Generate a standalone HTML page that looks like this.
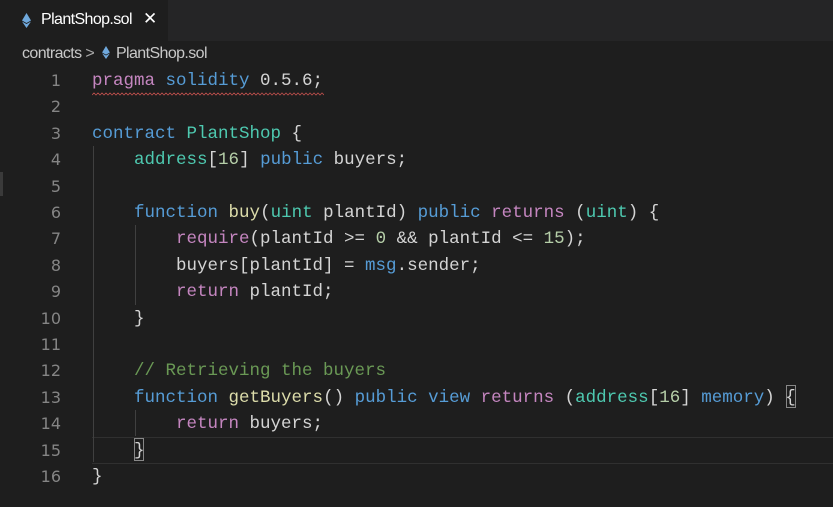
<!DOCTYPE html>
<html><head><style>
body{margin:0;width:833px;height:507px;background:#1e1e1e;overflow:hidden;position:relative;font-family:"Liberation Sans",sans-serif}
.tabbar{position:absolute;left:0;top:0;width:833px;height:41px;background:#252526}
.tab{position:absolute;left:0;top:0;width:168px;height:41px;background:#1e1e1e;color:#fff;font-size:16px;letter-spacing:-0.6px}
.crumb{position:absolute;left:22px;top:45px;color:#c8c8c8;font-size:16px;letter-spacing:-0.6px}
.ln{position:absolute;left:0;width:61px;text-align:right;color:#858585;font-family:"DejaVu Sans",sans-serif;font-size:16px}
.code{position:absolute;left:92px;white-space:pre;font-family:"Liberation Mono",monospace;font-size:17.5px;color:#d4d4d4}
.k{color:#569cd6}.p{color:#c586c0}.t{color:#4ec9b0}.n{color:#b5cea8}.f{color:#dcdcaa}.c{color:#6a9955}
.g{position:absolute;width:1px;background:#404040}
</style></head><body>
<div class="tabbar"></div>
<div class="tab">
<svg style="position:absolute;left:22px;top:13px" width="9" height="15" viewBox="0 0 9 15"><path d="M4.5 0L0 7.5 4.5 10 9 7.5Z" fill="#6fa8dc"/><path d="M4.5 11L0 8.5 4.5 15 9 8.5Z" fill="#6fa8dc"/></svg>
<span style="position:absolute;left:41px;top:11px">PlantShop.sol</span>
<span style="position:absolute;left:143px;top:9px;font-size:17px">✕</span>
</div>
<div class="crumb">contracts <span style="color:#aaa">&gt;</span>
<svg style="position:relative;top:1px;margin:0 6px 0 4px" width="8" height="13" viewBox="0 0 9 15"><path d="M4.5 0L0 7.5 4.5 10 9 7.5Z" fill="#6fa8dc"/><path d="M4.5 11L0 8.5 4.5 15 9 8.5Z" fill="#6fa8dc"/></svg>PlantShop.sol</div>
<div style="position:absolute;left:0;top:172px;width:3px;height:24px;background:#3a3a3a"></div>
<div style="position:absolute;left:92px;top:437px;width:741px;height:25px;border-top:1px solid #303030;border-bottom:1px solid #303030"></div>
<div class="g" style="left:93px;top:146px;height:316px"></div>
<div class="g" style="left:135px;top:225px;height:80px"></div>
<div class="g" style="left:135px;top:410px;height:26px"></div>
<div style="position:absolute;left:134px;top:438px;width:10px;height:23px;border:1px solid #888;box-sizing:border-box"></div>
<div style="position:absolute;left:786px;top:385px;width:10px;height:23px;border:1px solid #888;box-sizing:border-box"></div>
<svg style="position:absolute;left:92px;top:92px" width="232" height="4"><path d="M0 3 L2 1 L4 3 L6 1 L8 3 L10 1 L12 3 L14 1 L16 3 L18 1 L20 3 L22 1 L24 3 L26 1 L28 3 L30 1 L32 3 L34 1 L36 3 L38 1 L40 3 L42 1 L44 3 L46 1 L48 3 L50 1 L52 3 L54 1 L56 3 L58 1 L60 3 L62 1 L64 3 L66 1 L68 3 L70 1 L72 3 L74 1 L76 3 L78 1 L80 3 L82 1 L84 3 L86 1 L88 3 L90 1 L92 3 L94 1 L96 3 L98 1 L100 3 L102 1 L104 3 L106 1 L108 3 L110 1 L112 3 L114 1 L116 3 L118 1 L120 3 L122 1 L124 3 L126 1 L128 3 L130 1 L132 3 L134 1 L136 3 L138 1 L140 3 L142 1 L144 3 L146 1 L148 3 L150 1 L152 3 L154 1 L156 3 L158 1 L160 3 L162 1 L164 3 L166 1 L168 3 L170 1 L172 3 L174 1 L176 3 L178 1 L180 3 L182 1 L184 3 L186 1 L188 3 L190 1 L192 3 L194 1 L196 3 L198 1 L200 3 L202 1 L204 3 L206 1 L208 3 L210 1 L212 3 L214 1 L216 3 L218 1 L220 3 L222 1 L224 3 L226 1 L228 3 L230 1 L232 3" fill="none" stroke="#c0504d" stroke-width="0.8"/></svg>
<script>
const lines=[
'<span class="p">pragma</span> <span class="k">solidity</span> 0.5.6;',
'',
'<span class="k">contract</span> <span class="t">PlantShop</span> {',
'    <span class="t">address</span>[<span class="n">16</span>] <span class="k">public</span> buyers;',
'',
'    <span class="k">function</span> <span class="f">buy</span>(<span class="t">uint</span> plantId) <span class="k">public</span> <span class="p">returns</span> (<span class="t">uint</span>) {',
'        <span class="p">require</span>(plantId &gt;= <span class="n">0</span> &amp;&amp; plantId &lt;= <span class="n">15</span>);',
'        buyers[plantId] = <span class="k">msg</span>.sender;',
'        <span class="p">return</span> plantId;',
'    }',
'',
'    <span class="c">// Retrieving the buyers</span>',
'    <span class="k">function</span> <span class="f">getBuyers</span>() <span class="k">public</span> <span class="k">view</span> <span class="p">returns</span> (<span class="t">address</span>[<span class="n">16</span>] <span class="k">memory</span>) {',
'        <span class="p">return</span> buyers;',
'    }',
'}'];
let h='';
lines.forEach((l,i)=>{const top=71+i*26.4;
h+='<div class="ln" style="top:'+(top+0)+'px">'+(i+1)+'</div><div class="code" style="top:'+top+'px">'+l+'</div>';});
document.write(h);
</script>
</body></html>
